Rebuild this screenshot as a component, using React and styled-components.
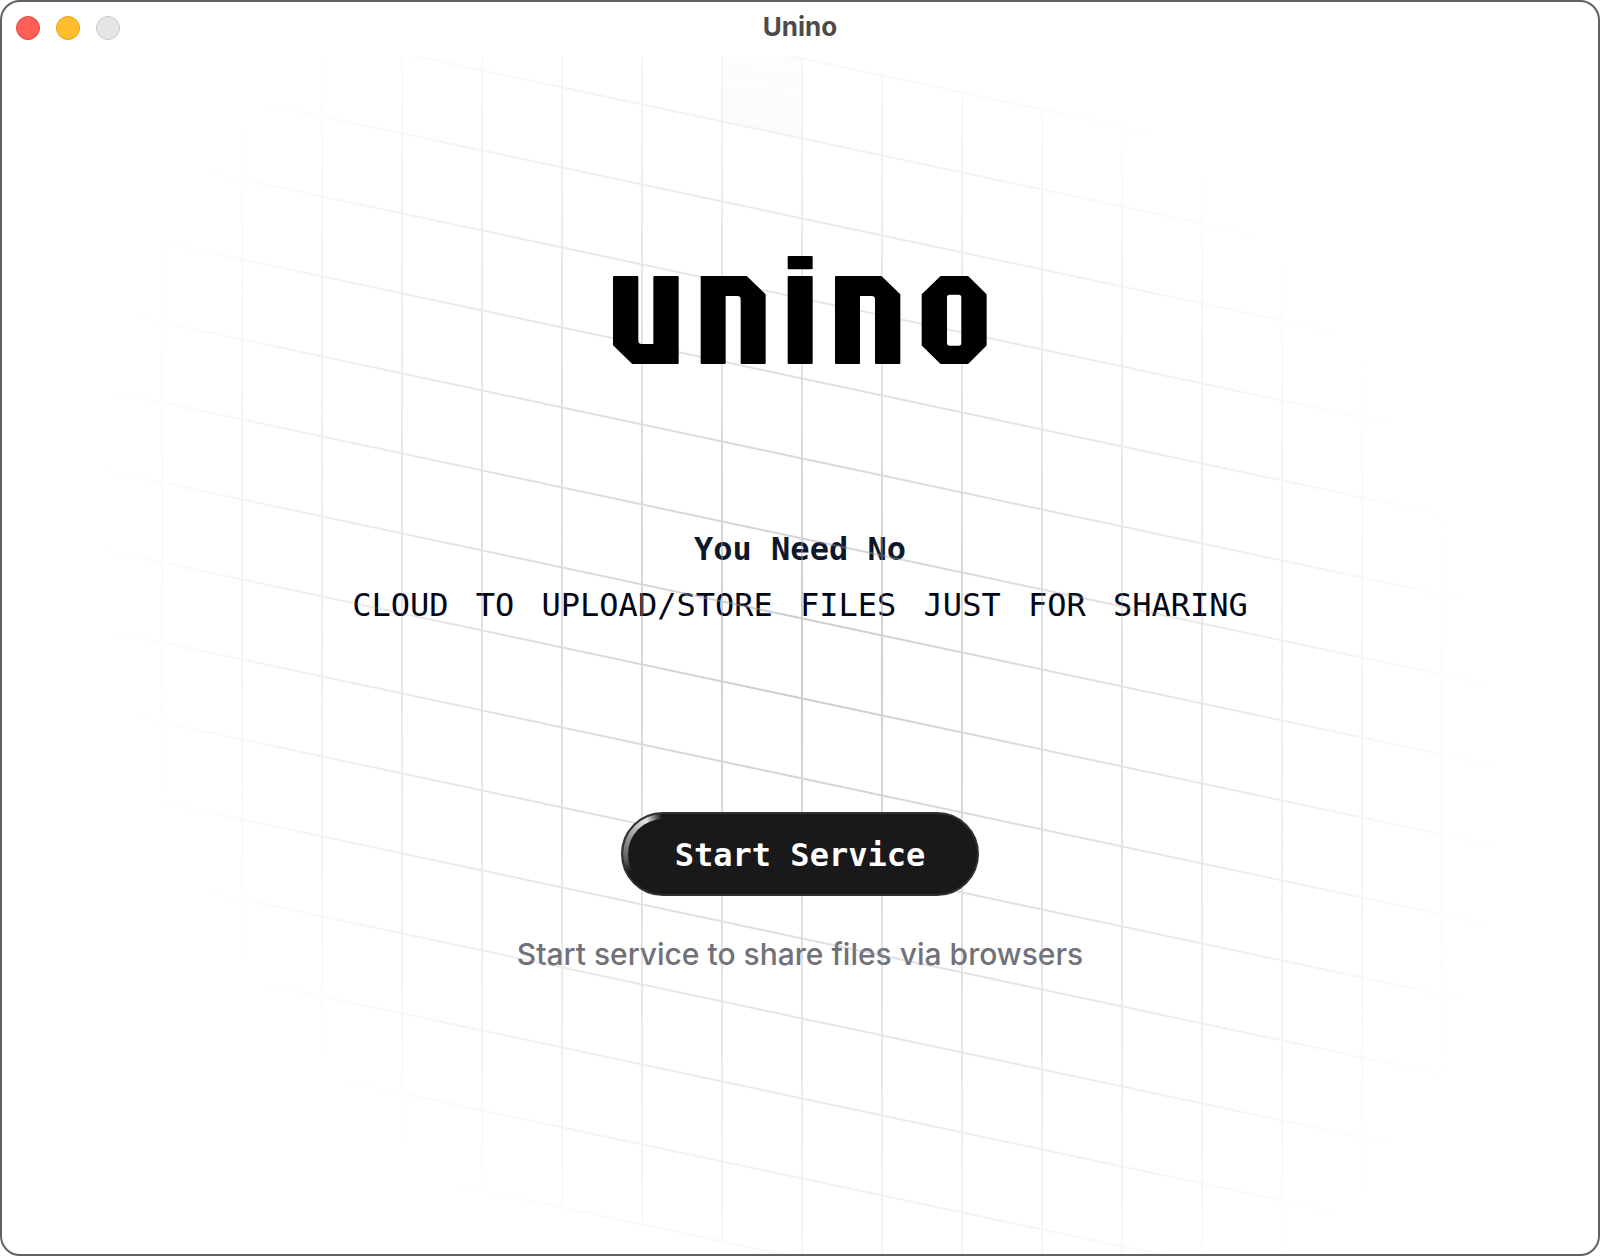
import React from "react";
import styled, { createGlobalStyle } from "styled-components";

const GlobalStyle = createGlobalStyle`
  *, *::before, *::after { box-sizing: border-box; }
  body { margin: 0; background: #ffffff; }
  h1, p { margin: 0; }
`;

const mono = `"DejaVu Sans Mono", "Liberation Mono", monospace`;
const sans = `Inter, "Open Sans", sans-serif`;

const Window = styled.div`
  display: flex;
  flex-direction: column;
  min-height: 100vh;
  border: 2px solid #636164;
  border-radius: 20px;
  background: #ffffff;
  overflow: hidden;
`;

const TitleBar = styled.header`
  display: grid;
  grid-template-columns: 1fr auto 1fr;
  height: 54px;
  padding: 0 14px;
`;

const Controls = styled.div`
  display: flex;
  gap: 16px;
  padding-top: 14px;
`;

const Dot = styled.button`
  width: 24px;
  height: 24px;
  padding: 0;
  border: 1px solid ${(p) => p.$edge};
  border-radius: 50%;
  background: ${(p) => p.$fill};
`;

const Title = styled.div`
  padding-top: 9px;
  color: #4b4b4c;
  font: 700 26px/32px ${sans};
`;

const Main = styled.main`
  position: relative;
  display: flex;
  flex: 1;
  flex-direction: column;
  align-items: center;
  padding: 200px 24px 0;
  overflow: hidden;
`;

const Grid = styled.svg`
  position: absolute;
  inset: 0 0 -6px;
  width: 100%;
  height: calc(100% + 6px);
  transform: skewY(12deg);
  pointer-events: none;
  mask-image: radial-gradient(700px circle at center, white, transparent);
`;

const Logo = styled.svg`
  position: relative;
  z-index: 1;
  display: block;
  width: 374px;
  height: 108px;
`;

const Tagline = styled.div`
  margin: 157px 0 179px;
  text-align: center;
`;

const Heading = styled.h1`
  color: #0f172a;
  font: 700 32px/56px ${mono};
`;

const Statement = styled.p`
  color: #020617;
  font: 400 32px/56px ${mono};
`;

const Word = styled.span`
  &:not(:last-child) {
    padding-right: 8px;
  }
`;

const StartButton = styled.button`
  position: relative;
  z-index: 1;
  isolation: isolate;
  height: 84px;
  padding: 2px 52px 0;
  border: 2px solid #303033;
  border-radius: 42px;
  background: #19191b;
  color: #ffffff;
  font: 700 32px/40px ${mono};
  cursor: pointer;

  &::before,
  &::after {
    content: "";
    position: absolute;
    z-index: -1;
    border-radius: 40px;
  }

  &::before {
    inset: 0;
    background: conic-gradient(
      from 242deg at 40px 50%,
      transparent 0deg,
      #5c5c5e 20deg,
      #9a9a9b 55deg,
      #e4e4e4 92deg,
      transparent 116deg
    );
  }

  &::after {
    inset: 5px;
    background: #19191b;
  }
`;

const Hint = styled.p`
  margin-top: 38px;
  color: #71717a;
  font: 500 30px/40px ${sans};
`;

const words = "CLOUD TO UPLOAD/STORE FILES JUST FOR SHARING".split(" ");

function GridPattern() {
  return (
    <Grid aria-hidden="true">
      <defs>
        <pattern id="cells" width="80" height="80" x="-1" y="1" patternUnits="userSpaceOnUse">
          <path d="M1 80V1H80" fill="none" stroke="rgba(156,156,172,0.55)" strokeWidth="2" />
        </pattern>
      </defs>
      <rect width="100%" height="100%" fill="url(#cells)" />
      <rect x="721" y="3" width="78" height="78" fill="#a1a1aa" fillOpacity="0.15" />
    </Grid>
  );
}

function UninoLogo() {
  return (
    <Logo viewBox="37 48 1122 324" role="img" aria-label="unino">
      <g fill="#000" stroke="#000" strokeWidth="6" strokeLinejoin="round">
        <path d="M40 111H110V303Q110 315 122 315H161V111H231V369H96L40 314Z" />
        <path d="M303 111H437L492 164V369H423V178Q423 165 410 165H372V369H303Z" />
        <path d="M564 51H633V85H564ZM564 111H633V369H564Z" />
        <path d="M706 111H841L896 164V369H826V178Q826 165 813 165H775V369H706Z" />
        <path
          fillRule="evenodd"
          d="M1021 111H1101L1155 164V315L1101 369H1021L966 315V164ZM1047 161Q1036 161 1036 172V309Q1036 320 1047 320H1074Q1085 320 1085 309V172Q1085 161 1074 161Z"
        />
      </g>
    </Logo>
  );
}

export default function App() {
  return (
    <>
      <GlobalStyle />
      <Window>
        <TitleBar>
          <Controls>
            <Dot aria-label="Close" $fill="#ff5f57" $edge="#e2463f" />
            <Dot aria-label="Minimize" $fill="#febc2e" $edge="#e1a116" />
            <Dot aria-label="Zoom" $fill="#e5e5e5" $edge="#c6c6c6" disabled />
          </Controls>
          <Title>Unino</Title>
        </TitleBar>
        <Main>
          <UninoLogo />
          <Tagline>
            <Heading>You Need No</Heading>
            <Statement>
              {words.map((word, i) => (
                <React.Fragment key={word}>
                  {i > 0 && " "}
                  <Word>{word}</Word>
                </React.Fragment>
              ))}
            </Statement>
          </Tagline>
          <StartButton type="button">Start Service</StartButton>
          <Hint>Start service to share files via browsers</Hint>
          <GridPattern />
        </Main>
      </Window>
    </>
  );
}
